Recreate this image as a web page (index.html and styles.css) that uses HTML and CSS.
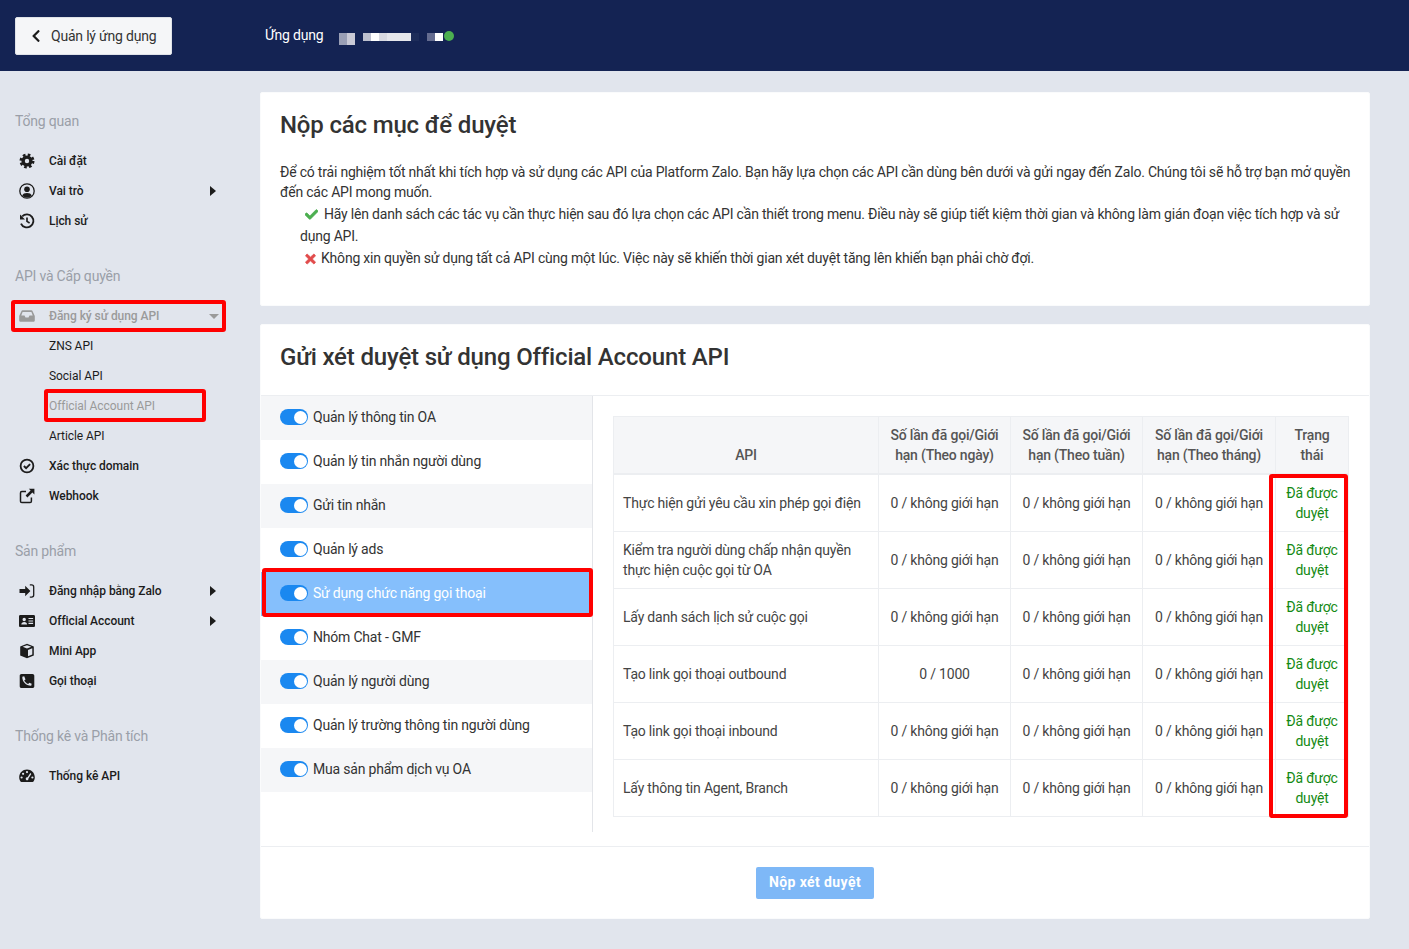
FILE: index.html
```html
<!DOCTYPE html>
<html lang="en">
<head>
    <meta charset="UTF-8">
    <meta name="viewport" content="width=device-width, initial-scale=1.0">
    <title>Nộp các mục để duyệt</title>
    <link rel="stylesheet" href="styles.css">
</head>
<body>

<!-- Icons -->
<svg class="icon-defs" xmlns="http://www.w3.org/2000/svg">
    <symbol id="i-back" viewBox="0 0 320 512"><path d="M34.52 239.03L228.87 44.69c9.37-9.37 24.57-9.37 33.94 0l22.67 22.67c9.36 9.36 9.37 24.52.04 33.9L131.49 256l154.02 154.75c9.34 9.38 9.32 24.54-.04 33.9l-22.67 22.67c-9.37 9.37-24.57 9.37-33.94 0L34.52 272.97c-9.37-9.37-9.37-24.57 0-33.94z"/></symbol>
    <symbol id="i-check" viewBox="0 0 512 512"><path d="M173.898 439.404l-166.4-166.4c-9.997-9.997-9.997-26.206 0-36.204l36.203-36.204c9.997-9.998 26.207-9.998 36.204 0L192 312.69 432.095 72.596c9.997-9.997 26.207-9.997 36.204 0l36.203 36.204c9.997 9.997 9.997 26.206 0 36.204l-294.4 294.401c-9.998 9.997-26.207 9.997-36.204-.001z"/></symbol>
    <symbol id="i-times" viewBox="0 0 352 512"><path d="M242.72 256l100.07-100.07c12.28-12.28 12.28-32.19 0-44.48l-22.24-22.24c-12.28-12.28-32.19-12.28-44.48 0L176 189.28 75.93 89.21c-12.28-12.28-32.19-12.28-44.48 0L9.21 111.45c-12.28 12.28-12.28 32.19 0 44.48L109.28 256 9.21 356.07c-12.28 12.28-12.28 32.19 0 44.48l22.24 22.24c12.28 12.28 32.2 12.28 44.48 0L176 322.72l100.07 100.07c12.28 12.28 32.2 12.28 44.48 0l22.24-22.24c12.28-12.28 12.28-32.19 0-44.48L242.72 256z"/></symbol>
    <symbol id="i-cog" viewBox="0 0 16 16"><circle cx="8" cy="8" r="3.9" fill="none" stroke="currentColor" stroke-width="3.4"/><circle cx="8" cy="8" r="6.2" fill="none" stroke="currentColor" stroke-width="2.6" stroke-dasharray="2.6 2.27"/></symbol>
    <symbol id="i-user" viewBox="0 0 16 16"><circle cx="8" cy="8" r="7.2" fill="none" stroke="currentColor" stroke-width="1.3"/><circle cx="8" cy="6.3" r="2.8"/><path d="M3.2 12.6C4 10.6 5.5 9.9 8 9.9s4 .7 4.8 2.7C11.500 14 9.800 14.600 8 14.600s-3.500-.6-4.800-2z"/></symbol>
    <symbol id="i-history" viewBox="0 0 16 16"><path d="M3.2 3.400A6.500 6.500 0 1 1 2 10.600" fill="none" stroke="currentColor" stroke-width="1.900"/><path d="M1 1.500l5 5H1z"/><path d="M8 4.600v3.800l2.600 1.600" fill="none" stroke="currentColor" stroke-width="1.700"/></symbol>
    <symbol id="i-inbox" viewBox="0 0 16 16"><path fill-rule="evenodd" d="M3.600 2.200h8.800c.5 0 .9.3 1.100.7L15.800 8v4.200c0 .9-.7 1.600-1.600 1.600H1.800c-.9 0-1.600-.7-1.600-1.600V8l2.300-5.100c.2-.4.6-.7 1.100-.7zm0 1.800L2.300 7.600h3.200l1 2h3l1-2h3.200L12.400 4z"/></symbol>
    <symbol id="i-verify" viewBox="0 0 16 16"><circle cx="8" cy="8" r="6.400" fill="none" stroke="currentColor" stroke-width="1.800"/><path d="M4.900 8l2.200 2.200 4-4" fill="none" stroke="currentColor" stroke-width="1.900"/></symbol>
    <symbol id="i-link" viewBox="0 0 16 16"><path d="M7 3.600H2.800c-.8 0-1.300.5-1.300 1.300v8.300c0 .8.5 1.300 1.300 1.300h8.300c.8 0 1.300-.5 1.300-1.300V9.600" fill="none" stroke="currentColor" stroke-width="1.500"/><path d="M9.800 .8h5.600v5.600l-2-2-5 5-1.800-1.800 5-5z"/></symbol>
    <symbol id="i-login" viewBox="0 0 16 16"><path d="M.5 6.000h5.700V2.800L11.400 8l-5.200 5.200V10H.5z"/><path d="M10.800 1.800h1.800c1.300 0 2.100.8 2.100 2.100v8.200c0 1.300-.8 2.100-2.100 2.100h-1.800" fill="none" stroke="currentColor" stroke-width="1.300"/></symbol>
    <symbol id="i-card" viewBox="0 0 16 16"><path fill-rule="evenodd" d="M1.300 2h13.400c.7 0 1.300.6 1.300 1.300v9.400c0 .7-.6 1.300-1.300 1.300H1.300C.6 14 0 13.400 0 12.700V3.300C0 2.600.6 2 1.300 2zm3.900 2.800a1.700 1.700 0 1 0 0 3.400 1.700 1.700 0 0 0 0-3.400zM2.300 11.400h5.800c0-1.500-1.200-2.500-2.900-2.500s-2.900 1-2.900 2.500zM9.500 5v1.100h4.600V5zm0 2.400v1.100h4.600V7.400zm0 2.400v1.100h4.600V9.800z"/></symbol>
    <symbol id="i-cube" viewBox="0 0 16 16"><path d="M8 .8l6.800 2.600v9.200L8 15.200 1.200 12.600V3.400zM3.600 3.800L8 5.500l4.400-1.700L8 2.200zM9 7v6.200l4.300-1.600V5.300z" fill-rule="evenodd"/></symbol>
    <symbol id="i-phone" viewBox="0 0 16 16"><path fill-rule="evenodd" d="M2.500 1h11c1 0 1.800.8 1.800 1.800v10.400c0 1-.8 1.800-1.800 1.800h-11c-1 0-1.800-.8-1.800-1.800V2.800C.7 1.800 1.500 1 2.500 1zm2.700 2.300L3.300 3.800c-.2 5 3.800 9 8.900 8.900l.5-1.900-2.400-1-1.100 1.300C7.600 10.400 5.800 8.600 5.200 7.500l1.300-1.100z"/></symbol>
    <symbol id="i-gauge" viewBox="0 0 16 16"><path fill-rule="evenodd" d="M8 1.500c4.300 0 7.800 3.400 7.800 7.700 0 1.600-.5 3.100-1.300 4.300-.2.300-.5.500-.8.500H2.300c-.3 0-.6-.2-.8-.5C.7 12.300.2 10.800.2 9.200.2 4.900 3.700 1.500 8 1.500zM8 3a1.100 1.100 0 1 0 0 2.200A1.100 1.100 0 0 0 8 3zM4.100 4.700a1.100 1.100 0 1 0 0 2.200 1.100 1.100 0 0 0 0-2.200zM2.600 8.400a1.100 1.100 0 1 0 0 2.200 1.100 1.100 0 0 0 0-2.200zm10.800 0a1.100 1.100 0 1 0 0 2.200 1.100 1.100 0 0 0 0-2.200zM11.300 5L8.600 9.300c-.9-.2-1.900.4-1.900 1.500 0 .9.600 1.500 1.300 1.500 1 0 1.600-.8 1.400-1.800l2.900-4.500z"/></symbol>
</svg>

<header class="topbar">
    <button class="back-btn"><svg class="back-icon"><use href="#i-back"/></svg>Quản lý ứng dụng</button>
    <span class="app-label">Ứng dụng</span>
    <!-- blurred app name -->
    <div class="app-name">
        <div class="blur-group tall"><i class="p1"></i><i class="p2"></i></div>
        <div class="blur-group"><i class="p3"></i><i class="p4"></i><i class="p5"></i><i class="p6"></i><i class="p6"></i><i class="p6"></i><i class="p7"></i></div>
        <div class="blur-group"><i class="p8"></i><i class="p4"></i></div>
        <span class="status-dot"></span>
    </div>
</header>

<div class="page">
    <aside class="sidebar">
        <div class="nav-group">
            <div class="nav-title">Tổng quan</div>
            <a class="nav-item"><svg class="nav-icon"><use href="#i-cog"/></svg>Cài đặt</a>
            <a class="nav-item"><svg class="nav-icon"><use href="#i-user"/></svg>Vai trò<span class="caret-right"></span></a>
            <a class="nav-item"><svg class="nav-icon"><use href="#i-history"/></svg>Lịch sử</a>
        </div>
        <div class="nav-group">
            <div class="nav-title">API và Cấp quyền</div>
            <a class="nav-item open marked"><svg class="nav-icon"><use href="#i-inbox"/></svg>Đăng ký sử dụng API<span class="caret-down"></span></a>
            <a class="nav-item sub">ZNS API</a>
            <a class="nav-item sub">Social API</a>
            <a class="nav-item sub current marked">Official Account API</a>
            <a class="nav-item sub">Article API</a>
            <a class="nav-item"><svg class="nav-icon"><use href="#i-verify"/></svg>Xác thực domain</a>
            <a class="nav-item"><svg class="nav-icon"><use href="#i-link"/></svg>Webhook</a>
        </div>
        <div class="nav-group">
            <div class="nav-title">Sản phẩm</div>
            <a class="nav-item"><svg class="nav-icon"><use href="#i-login"/></svg>Đăng nhập bằng Zalo<span class="caret-right"></span></a>
            <a class="nav-item"><svg class="nav-icon"><use href="#i-card"/></svg>Official Account<span class="caret-right"></span></a>
            <a class="nav-item"><svg class="nav-icon"><use href="#i-cube"/></svg>Mini App</a>
            <a class="nav-item"><svg class="nav-icon"><use href="#i-phone"/></svg>Gọi thoại</a>
        </div>
        <div class="nav-group">
            <div class="nav-title">Thống kê và Phân tích</div>
            <a class="nav-item"><svg class="nav-icon"><use href="#i-gauge"/></svg>Thống kê API</a>
        </div>
    </aside>

    <main class="content">
        <section class="card intro">
            <h2>Nộp các mục để duyệt</h2>
            <p>Để có trải nghiệm tốt nhất khi tích hợp và sử dụng các API của Platform Zalo. Bạn hãy lựa chọn các API cần dùng bên dưới và gửi ngay đến Zalo. Chúng tôi sẽ hỗ trợ bạn mở quyền đến các API mong muốn.</p>
            <ul class="tips">
                <li><svg class="tip-check"><use href="#i-check"/></svg>Hãy lên danh sách các tác vụ cần thực hiện sau đó lựa chọn các API cần thiết trong menu. Điều này sẽ giúp tiết kiệm thời gian và không làm gián đoạn việc tích hợp và sử dụng API.</li>
                <li><svg class="tip-times"><use href="#i-times"/></svg>Không xin quyền sử dụng tất cả API cùng một lúc. Việc này sẽ khiến thời gian xét duyệt tăng lên khiến bạn phải chờ đợi.</li>
            </ul>
        </section>

        <section class="card">
            <div class="card-head"><h2>Gửi xét duyệt sử dụng Official Account API</h2></div>
            <div class="card-body">
                <ul class="scopes">
                    <li><span class="toggle"></span>Quản lý thông tin OA</li>
                    <li><span class="toggle"></span>Quản lý tin nhắn người dùng</li>
                    <li><span class="toggle"></span>Gửi tin nhắn</li>
                    <li><span class="toggle"></span>Quản lý ads</li>
                    <li class="active"><span class="toggle"></span>Sử dụng chức năng gọi thoại</li>
                    <li><span class="toggle"></span>Nhóm Chat - GMF</li>
                    <li><span class="toggle"></span>Quản lý người dùng</li>
                    <li><span class="toggle"></span>Quản lý trường thông tin người dùng</li>
                    <li><span class="toggle"></span>Mua sản phẩm dịch vụ OA</li>
                </ul>
                <div class="table-wrap">
                    <table class="api-table">
                        <colgroup>
                            <col class="col-api"><col class="col-num"><col class="col-num"><col class="col-num wide"><col class="col-status">
                        </colgroup>
                        <thead>
                            <tr>
                                <th class="th-api">API</th>
                                <th>Số lần đã gọi/Giới hạn (Theo ngày)</th>
                                <th>Số lần đã gọi/Giới hạn (Theo tuần)</th>
                                <th>Số lần đã gọi/Giới hạn (Theo tháng)</th>
                                <th>Trạng thái</th>
                            </tr>
                        </thead>
                        <tbody>
                            <tr>
                                <td>Thực hiện gửi yêu cầu xin phép gọi điện</td>
                                <td>0 / không giới hạn</td><td>0 / không giới hạn</td><td>0 / không giới hạn</td>
                                <td class="approved">Đã được duyệt</td>
                            </tr>
                            <tr>
                                <td>Kiểm tra người dùng chấp nhận quyền thực hiện cuộc gọi từ OA</td>
                                <td>0 / không giới hạn</td><td>0 / không giới hạn</td><td>0 / không giới hạn</td>
                                <td class="approved">Đã được duyệt</td>
                            </tr>
                            <tr>
                                <td>Lấy danh sách lịch sử cuộc gọi</td>
                                <td>0 / không giới hạn</td><td>0 / không giới hạn</td><td>0 / không giới hạn</td>
                                <td class="approved">Đã được duyệt</td>
                            </tr>
                            <tr>
                                <td>Tạo link gọi thoại outbound</td>
                                <td>0 / 1000</td><td>0 / không giới hạn</td><td>0 / không giới hạn</td>
                                <td class="approved">Đã được duyệt</td>
                            </tr>
                            <tr>
                                <td>Tạo link gọi thoại inbound</td>
                                <td>0 / không giới hạn</td><td>0 / không giới hạn</td><td>0 / không giới hạn</td>
                                <td class="approved">Đã được duyệt</td>
                            </tr>
                            <tr>
                                <td>Lấy thông tin Agent, Branch</td>
                                <td>0 / không giới hạn</td><td>0 / không giới hạn</td><td>0 / không giới hạn</td>
                                <td class="approved">Đã được duyệt</td>
                            </tr>
                        </tbody>
                    </table>
                    <div class="status-mark"></div>
                </div>
            </div>
            <div class="card-foot"><button class="submit-btn">Nộp xét duyệt</button></div>
        </section>
    </main>
</div>

</body>
</html>
```

FILE: styles.css
```css
/* General reset */
*,
*::after {
    box-sizing: border-box;
}

body {
    margin: 0;
    background-color: #e1e5ed;
    font-family: Roboto, "Liberation Sans", sans-serif;
    font-size: 14px;
    line-height: 20px;
    letter-spacing: -0.2px;
    color: #333;
}

.icon-defs {
    display: none;
}

/* Top bar */
.topbar {
    display: flex;
    align-items: center;
    height: 71px;
    padding: 0 0 0 15px;
    background-color: #142353;
}

.back-btn {
    display: flex;
    align-items: center;
    width: 157px;
    height: 38px;
    padding: 0 0 0 15px;
    background-color: #f5f6f8;
    border: 1px solid #dfe2e8;
    border-radius: 2px;
    font-family: inherit;
    font-size: 14px;
    letter-spacing: -0.2px;
    color: #333;
}

.back-icon {
    width: 10px;
    height: 14px;
    margin-right: 10px;
    fill: #1c1c1c;
}

.app-label {
    width: 59px;
    margin-left: 93px;
    margin-top: -1px;
    color: #fff;
}

.app-name {
    display: flex;
    align-items: flex-start;
    height: 12px;
    margin-left: 15px;
    margin-top: 6px;
}

.blur-group {
    display: flex;
    height: 8px;
    margin-right: 8px;
}

.blur-group.tall {
    height: 12px;
}

.blur-group i {
    display: block;
    width: 8px;
}

.p1 { background-color: #9a9fb5; }
.p2 { background-color: #c9cad6; }
.p3 { background-color: #bdc0cf; }
.p4 { background-color: #fff; }
.p5 { background-color: #d9dae2; }
.p6 { background-color: #e6e7ec; }
.p7 { background-color: #1d2c59; }
.p8 { background-color: #646c90; }

.status-dot {
    width: 10px;
    height: 10px;
    margin: -2px 0 0 -7px;
    border-radius: 50%;
    background-color: #4caf50;
}

/* Layout */
.page {
    display: flex;
}

.sidebar {
    flex: 0 0 260px;
    padding-top: 40px;
}

.content {
    flex: 0 0 1110px;
    padding-top: 21px;
}

/* Sidebar */
.nav-group {
    margin-bottom: 30px;
}

.nav-title {
    margin-bottom: 15px;
    padding-left: 15px;
    color: #9a9fa8;
}

.nav-item {
    position: relative;
    display: flex;
    align-items: center;
    height: 30px;
    padding-left: 19px;
    font-size: 12px;
    font-weight: 500;
    letter-spacing: -0.06px;
    color: #1c1c1c;
}

.nav-item.sub {
    padding-left: 49px;
    font-weight: 400;
}

.nav-item.open,
.nav-item.current {
    color: #9a9a9a;
}

.nav-icon {
    flex: none;
    width: 16px;
    height: 16px;
    margin-right: 14px;
    fill: currentColor;
    color: #1c1c1c;
}

.nav-item.open .nav-icon {
    color: #9a9a9a;
}

.caret-right {
    position: absolute;
    left: 210px;
    top: 10px;
    border-left: 6px solid #1c1c1c;
    border-top: 5px solid transparent;
    border-bottom: 5px solid transparent;
}

.caret-down {
    position: absolute;
    left: 209px;
    top: 13px;
    border-top: 5px solid #9a9a9a;
    border-left: 5px solid transparent;
    border-right: 5px solid transparent;
}

/* Red marks drawn over the screenshot */
.nav-item.marked::after,
.scopes .active::after,
.status-mark {
    content: "";
    position: absolute;
    border: 4px solid #f00;
    border-radius: 3px;
    pointer-events: none;
}

.nav-item.open::after {
    left: 11px;
    top: -1px;
    width: 215px;
    height: 32px;
}

.nav-item.current::after {
    left: 44px;
    top: -2px;
    width: 162px;
    height: 33px;
}

/* Cards */
.card {
    margin-bottom: 18px;
    background-color: #fff;
    border: 1px solid #fafbfc;
    border-radius: 2px;
}

.card h2 {
    margin: 0;
    font-size: 24px;
    line-height: 28px;
    font-weight: 500;
    letter-spacing: -0.17px;
    color: #333;
}

.intro {
    height: 214px;
    padding: 18px 17px 0 19px;
}

.intro h2 {
    margin-bottom: 23px;
}

.intro p {
    margin: 0 0 1px;
}

.tips {
    margin: 0;
    padding: 0 0 0 20px;
    list-style: none;
    line-height: 22px;
}

.tip-check {
    width: 13px;
    height: 13px;
    margin: 0 6px 0 5px;
    vertical-align: -2px;
    fill: #4caf50;
    stroke: #4caf50;
    stroke-width: 30px;
}

.tip-times {
    width: 11px;
    height: 14px;
    margin: 0 5px 0 5px;
    vertical-align: -3px;
    fill: #e14b4b;
    stroke: #e14b4b;
    stroke-width: 30px;
}

.card-head {
    height: 71px;
    padding: 18px 19px 0;
    border-bottom: 1px solid #eceef1;
}

.card-body {
    display: flex;
    align-items: flex-start;
    height: 451px;
    border-bottom: 1px solid #eceef1;
}

/* Scope list */
.scopes {
    flex: 0 0 332px;
    height: 436px;
    margin: 0;
    padding: 0;
    list-style: none;
    border-right: 1px solid #e3e5e9;
}

.scopes li {
    position: relative;
    display: flex;
    align-items: center;
    height: 44px;
    padding: 0 0 2px 19px;
}

.scopes li:nth-child(odd) {
    background-color: #f5f6f8;
}

.scopes li.active {
    background-color: #85bffc;
    color: #fff;
}

.scopes .active::after {
    left: 1px;
    top: -4px;
    width: 331px;
    height: 49px;
}

.toggle {
    position: relative;
    flex: none;
    width: 28px;
    height: 16px;
    margin-right: 5px;
    border-radius: 8px;
    background-color: #1a88f0;
}

.toggle::after {
    content: "";
    position: absolute;
    right: 1px;
    top: 1.5px;
    width: 13px;
    height: 13px;
    border-radius: 50%;
    background-color: #fff;
}

/* API table */
.table-wrap {
    position: relative;
    margin: 20px 20px 0;
}

.api-table {
    width: 735px;
    table-layout: fixed;
    border-collapse: collapse;
}

.col-api { width: 265px; }
.col-num { width: 132px; }
.col-num.wide { width: 133px; }
.col-status { width: 73px; }

.api-table th,
.api-table td {
    padding: 8px 8px;
    border: 1px solid #eceef1;
    text-align: center;
}

.api-table th {
    height: 57px;
    background-color: #f5f6f8;
    border-bottom-width: 2px;
    font-weight: 500;
    color: #555;
}

.api-table th.th-api {
    vertical-align: bottom;
}

.api-table td {
    height: 57px;
    color: #444;
}

.api-table td:first-child {
    padding-left: 9px;
    text-align: left;
}

.api-table .approved {
    color: #148a14;
}

.status-mark {
    right: 1px;
    top: 58px;
    width: 79px;
    height: 344px;
}

/* Footer */
.card-foot {
    display: flex;
    justify-content: center;
    height: 71px;
    padding-top: 20px;
}

.submit-btn {
    width: 118px;
    height: 32px;
    padding: 0 0 2px 1px;
    margin-left: -1px;
    background-color: #7eb8f7;
    border: none;
    border-radius: 2px;
    font-family: inherit;
    font-size: 14px;
    font-weight: 700;
    letter-spacing: 0.4px;
    color: #fff;
}
```
